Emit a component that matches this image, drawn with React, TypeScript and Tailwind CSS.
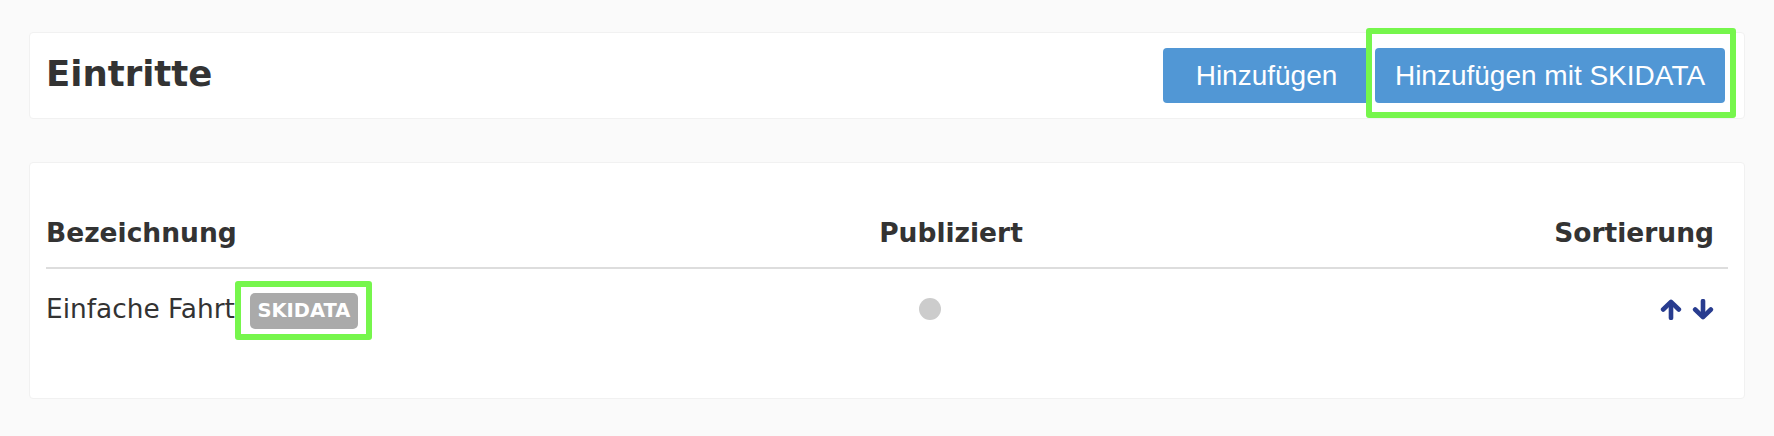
import type { ReactNode } from 'react';

const body = "font-['DejaVu_Sans',_'Noto_Sans',_sans-serif]";
const btnFont = "font-['Liberation_Sans',_Arial,_sans-serif]";

// grüner Markierungsrahmen (Annotation über dem Element)
function Highlight({ className }: { className: string }) {
  return (
    <span
      className={`pointer-events-none absolute rounded-[3px] border-[6px] border-[#76f64c] ${className}`}
    />
  );
}

function Arrow({ down = false }: { down?: boolean }) {
  return (
    <svg
      viewBox="0 0 21 20"
      className={`h-[21px] w-[22px] ${down ? 'rotate-180' : ''}`}
      fill="none"
      stroke="#283c8f"
      strokeWidth="4.4"
      strokeLinecap="round"
      strokeLinejoin="round"
    >
      <path d="M10.5 18V3.5" />
      <path d="M3 10 10.5 2.7 18 10" />
    </svg>
  );
}

function Card({ children, className }: { children: ReactNode; className: string }) {
  return (
    <div className={`rounded-[4px] border border-[#f1f1f1] bg-white ${className}`}>
      {children}
    </div>
  );
}

export default function App() {
  return (
    <div className={`min-h-[436px] bg-[#fafafa] px-[29px] pt-[32px] text-[#333] ${body}`}>
      {/* Kopfbereich */}
      <Card className="flex h-[87px] items-center justify-between pl-4 pr-[19px]">
        <h1 className="pb-[4px] text-[35.5px] font-bold leading-[40px]">Eintritte</h1>
        <div className={`flex gap-[5px] ${btnFont}`}>
          <button className="h-[55px] w-[207px] rounded-[4px] bg-[#5197d5] text-[28px] text-white">
            Hinzufügen
          </button>
          <div className="relative">
            <button className="h-[55px] w-[350px] rounded-[4px] bg-[#5197d5] text-[28px] text-white">
              Hinzufügen mit SKIDATA
            </button>
            <Highlight className="-top-[20px] -bottom-[15px] -left-[9px] -right-[11px]" />
          </div>
        </div>
      </Card>

      {/* Tabelle */}
      <Card className="mt-[43px] h-[237px] px-4 pt-[52px]">
        <div className="flex border-b-2 border-[#dddddd] pb-4 text-[26.5px] font-bold leading-[36px]">
          <div className="w-[820px]">Bezeichnung</div>
          <div className="w-[170px] text-center">Publiziert</div>
          <div className="flex-1 pr-[14px] text-right">Sortierung</div>
        </div>
        <div className="flex items-center pt-5 text-[26.4px] leading-[36px]">
          <div className="flex w-[820px] items-center">
            <span>Einfache Fahrt</span>
            <span className="relative ml-[15px] mt-1">
              <span className="flex h-[36px] w-[108px] items-center justify-center rounded-[5px] bg-[#aaaaaa] text-[19.5px] font-bold leading-none text-white">
                SKIDATA
              </span>
              <Highlight className="-top-[12px] -bottom-[11px] -left-[15px] -right-[14px]" />
            </span>
          </div>
          <div className="w-[170px] pl-[53px]">
            <div className="h-[22px] w-[22px] rounded-full bg-[#cccccc]" />
          </div>
          <div className="flex flex-1 items-center justify-end gap-[10px] pr-[14px]">
            <Arrow />
            <Arrow down />
          </div>
        </div>
      </Card>
    </div>
  );
}
